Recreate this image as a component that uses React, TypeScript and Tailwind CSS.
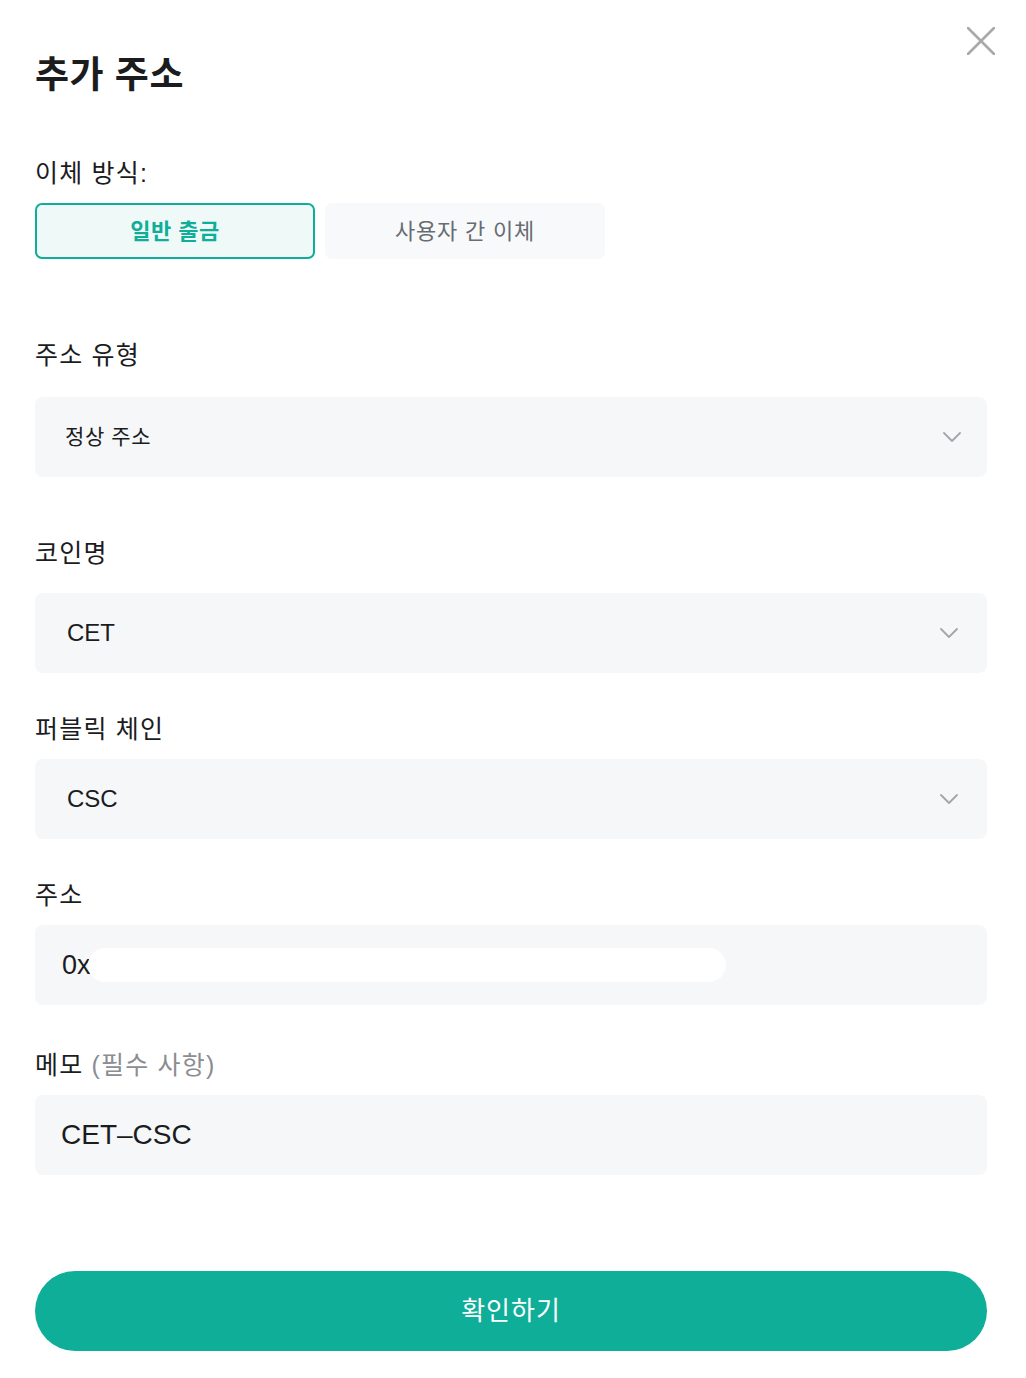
import React from "react";

const FONT = { fontFamily: '"Liberation Sans", "Noto Sans CJK KR", sans-serif' };

function Chevron({ className = "" }: { className?: string }) {
  return (
    <svg className={className} width="20" height="12" viewBox="0 0 20 12" fill="none">
      <path d="M2 2 L10 10 L18 2" stroke="#a3a5a8" strokeWidth="1.8" strokeLinecap="round" strokeLinejoin="round" />
    </svg>
  );
}

function Label({ children, className = "" }: { children: React.ReactNode; className?: string }) {
  return <div className={`text-[25px] leading-[32px] tracking-[1.2px] text-[#1b1c1e] ${className}`}>{children}</div>;
}

function Select({ value, big = false, className = "", chevronClass = "mr-[26px]" }: { value: string; big?: boolean; className?: string; chevronClass?: string }) {
  return (
    <div className={`h-[80px] rounded-[8px] bg-[#f6f7f9] flex items-center justify-between ${className}`}>
      <span className={big ? "ml-[32px] text-[24px] text-[#1b1c1e]" : "ml-[30px] text-[21px] tracking-[0.6px] text-[#1b1c1e]"}>{value}</span>
      <Chevron className={chevronClass} />
    </div>
  );
}

export default function App() {
  return (
    <div className="relative w-[1026px] h-[1378px] bg-white pl-[35px] pr-[39px]" style={FONT}>
      <button className="absolute right-[31px] top-[27px] w-[28px] h-[28px]">
        <svg width="28" height="28" viewBox="0 0 28 28" fill="none">
          <path d="M1 1 L27 27 M27 1 L1 27" stroke="#a8a9ab" strokeWidth="2.6" strokeLinecap="round" />
        </svg>
      </button>

      <div className="pt-[55px] text-[37px] leading-[42px] tracking-[0.5px] font-bold text-[#1b1c1e]">추가 주소</div>

      <Label className="mt-[60px]">이체 방식:</Label>
      <div className="mt-[14px] flex gap-[10px]">
        <div className="w-[280px] h-[56px] rounded-[7px] border-2 border-[#0fae98] bg-[#effaf8] flex items-center justify-center text-[22px] tracking-[0.5px] font-bold text-[#0fae98]">
          일반 출금
        </div>
        <div className="w-[280px] h-[56px] rounded-[7px] bg-[#f8f9fb] flex items-center justify-center text-[22px] tracking-[0.8px] text-[#676b72]">
          사용자 간 이체
        </div>
      </div>

      <Label className="mt-[80px]">주소 유형</Label>
      <Select value="정상 주소" className="mt-[26px]" chevronClass="mr-[25px]" />

      <Label className="mt-[60px]">코인명</Label>
      <Select value="CET" big className="mt-[24px]" chevronClass="mr-[28px]" />

      <Label className="mt-[40px]">퍼블릭 체인</Label>
      <Select value="CSC" big className="mt-[14px]" chevronClass="mr-[28px]" />

      <Label className="mt-[40px]">주소</Label>
      <div className="mt-[14px] h-[80px] rounded-[8px] bg-[#f6f7f9] flex items-center">
        <span className="ml-[27px] text-[27px] text-[#1b1c1e]">0x.</span>
        <div className="ml-[-10px] w-[638px] h-[34px] rounded-full bg-white" />
      </div>

      <Label className="mt-[44px]">
        메모 <span className="text-[#8b8d91]">(필수 사항)</span>
      </Label>
      <div className="mt-[14px] h-[80px] rounded-[8px] bg-[#f6f7f9] flex items-center">
        <span className="ml-[26px] text-[28px] text-[#1b1c1e]">CET–CSC</span>
      </div>

      <button className="mt-[96px] w-full h-[80px] rounded-full bg-[#0fae98] flex items-center justify-center text-[26px] tracking-[1px] text-white">
        확인하기
      </button>
    </div>
  );
}
